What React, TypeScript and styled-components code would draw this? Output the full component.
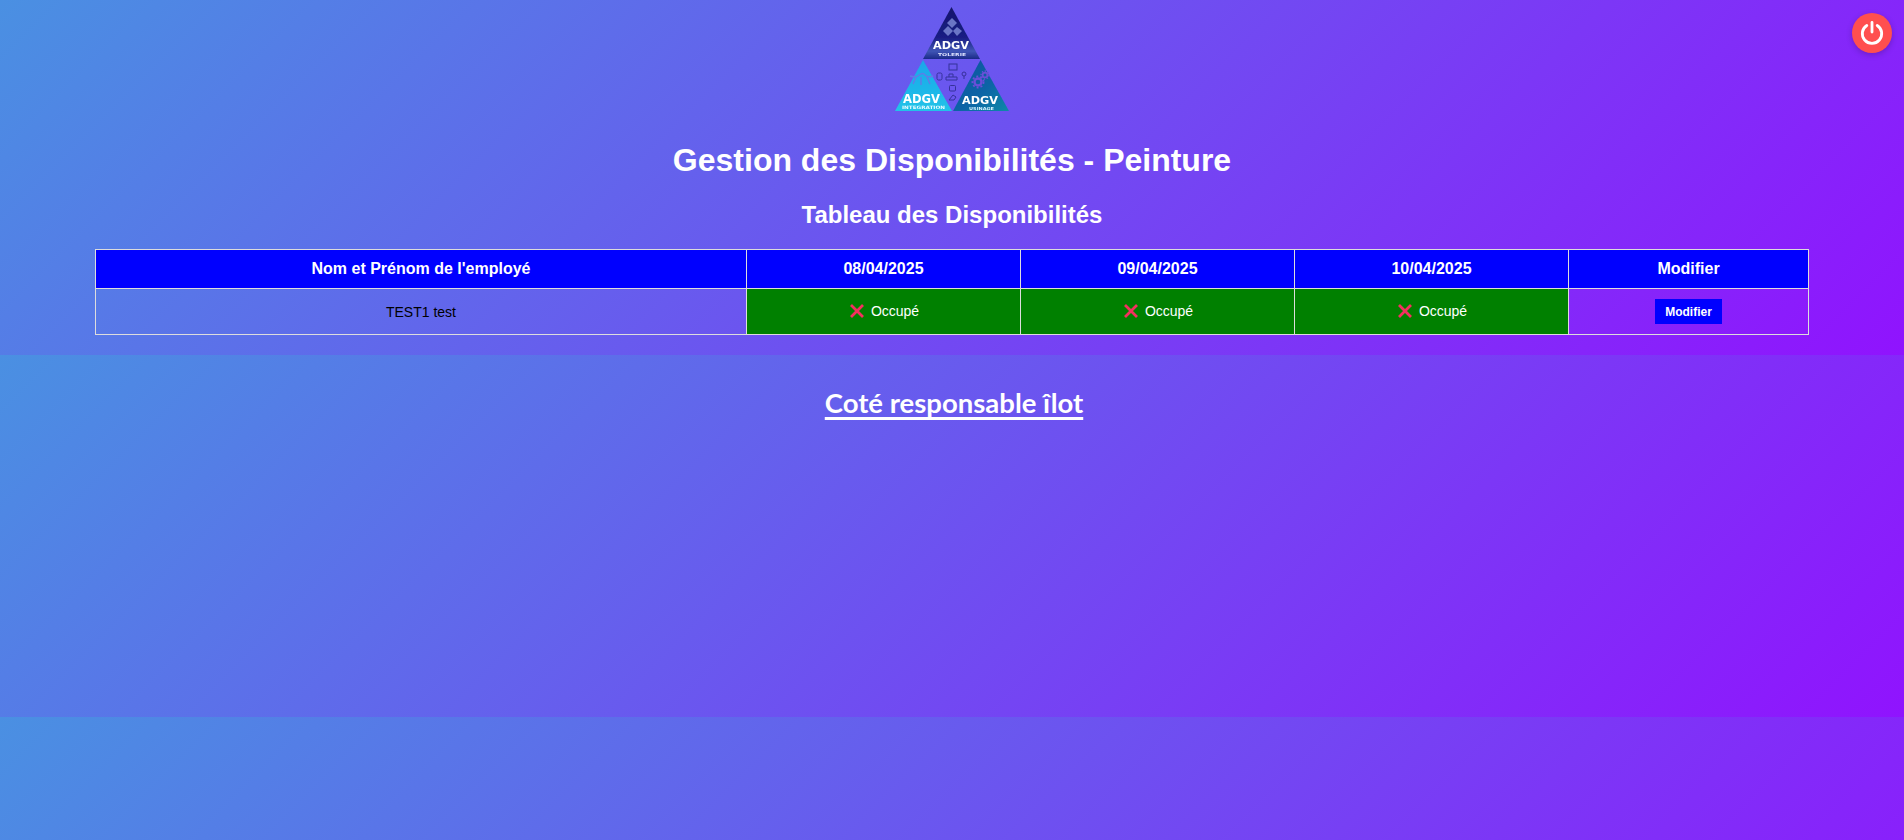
import React from "react";
import styled, { createGlobalStyle } from "styled-components";

const Global = createGlobalStyle`
  html, body { margin: 0; padding: 0; }
  body {
    font-family: "Liberation Sans", Arial, sans-serif;
    color: #fff;
    overflow: hidden;
  }
`;

const Page = styled.div`
  display: flex;
  flex-direction: column;
  height: 840px;
`;

const TopSection = styled.section`
  height: 355px;
  flex: none;
  background: linear-gradient(135deg, #4a90e2, #9013fe);
  display: flex;
  flex-direction: column;
  align-items: center;
`;

const LogoBox = styled.div`
  height: 120px;
  width: 114px;
  flex: none;
`;

const Title = styled.h1`
  margin: 22px 0 0;
  font-size: 32px;
  line-height: 37px;
  font-weight: 700;
  text-align: center;
`;

const SubTitle = styled.h2`
  margin: 22px 0 0;
  font-size: 24px;
  line-height: 28px;
  font-weight: 700;
  text-align: center;
`;

const Table = styled.table`
  margin-top: 20px;
  width: 1713px;
  table-layout: fixed;
  border-collapse: collapse;
`;

const HeadCell = styled.th`
  background: #0000ff;
  border: 1px solid #ddd;
  color: #fff;
  font-size: 16px;
  font-weight: 700;
  height: 38px;
  padding: 0;
  text-align: center;
`;

const Cell = styled.td<{ $busy?: boolean }>`
  background: ${(p) => (p.$busy ? "#008000" : "transparent")};
  border: 1px solid #ddd;
  color: ${(p) => (p.$busy ? "#fff" : "#000")};
  font-size: 14px;
  height: 45px;
  padding: 0;
  text-align: center;
`;

const Status = styled.span`
  display: inline-flex;
  align-items: center;
  gap: 7px;
  margin-left: 2px;
`;

const EditButton = styled.button`
  display: inline-block;
  width: 67px;
  height: 25px;
  border: none;
  padding: 0;
  background: #0000ff;
  color: #fff;
  font-family: "Liberation Sans", Arial, sans-serif;
  font-size: 12px;
  font-weight: 700;
  vertical-align: middle;
`;

const LowerSection = styled.section`
  height: 362px;
  flex: none;
  background: linear-gradient(135deg, #4a90e2, #9013fe);
  display: flex;
  flex-direction: column;
  align-items: center;
`;

const LowerTitle = styled.h2`
  margin: 31px 0 0 4px;
  font-family: Lato, "Open Sans", sans-serif;
  font-size: 27.5px;
  line-height: 34px;
  font-weight: 700;
  text-decoration: underline;
  text-decoration-thickness: 3px;
  text-underline-offset: 4px;
  text-decoration-skip-ink: none;
`;

const BottomBand = styled.div`
  flex: 1;
  background: linear-gradient(135deg, #4a90e2, #9013fe) 0 0 / 100% 358px no-repeat;
`;

const PowerButton = styled.button`
  position: fixed;
  top: 13px;
  right: 12px;
  width: 40px;
  height: 40px;
  border: none;
  border-radius: 50%;
  padding: 0;
  background: #ff4f4f;
  box-shadow: 0 2px 6px rgba(0, 0, 0, 0.2);
  display: flex;
  align-items: center;
  justify-content: center;
`;

const logoFont = "'DejaVu Sans', 'Liberation Sans', sans-serif";

const Logo = () => (
  <svg width="114" height="120" viewBox="0 0 114 120" aria-label="ADGV">
    <defs>
      <linearGradient id="tg" x1="0" y1="0" x2="0" y2="1">
        <stop offset="0" stopColor="#14146c" />
        <stop offset="0.6" stopColor="#1a1f85" />
        <stop offset="0.85" stopColor="#3f55b5" />
        <stop offset="1" stopColor="#1c2a88" />
      </linearGradient>
      <linearGradient id="lg" x1="0" y1="0" x2="0" y2="1">
        <stop offset="0" stopColor="#1aa5ea" />
        <stop offset="1" stopColor="#22c3e8" />
      </linearGradient>
      <linearGradient id="rg" x1="0" y1="0" x2="1" y2="1">
        <stop offset="0" stopColor="#0a4f9e" />
        <stop offset="0.6" stopColor="#0b66a6" />
        <stop offset="1" stopColor="#0d8aa8" />
      </linearGradient>
      <filter id="soft"><feGaussianBlur stdDeviation="0.4" /></filter>
    </defs>
    <g filter="url(#soft)">
      <polygon points="56.5,7 28,59 85,59" fill="url(#tg)" />
      <polygon points="28,60 0,111 57,111" fill="url(#lg)" />
      <polygon points="85.5,60 58,111 114,111" fill="url(#rg)" />
      <g fill="#7f8bd8" opacity="0.8">
        <polygon points="52,23 57,18 62,23 57,28" />
        <polygon points="48,31 53,26 58,31 53,36" />
        <polygon points="58,31 62,27 67,31 62,36" />
      </g>
      <g fill="none" stroke="#5f7ce8" strokeWidth="1.4">
        <path d="M15 76 q6 2 9 -1 q4 -3 6 0 q3 3 8 1" />
        <path d="M21 77 l-3 7 M26 77 v8 M32 77 l3 7" />
      </g>
      <g fill="none" stroke="#6a4fd8">
        <circle cx="83" cy="82" r="3.5" strokeWidth="2.4" />
        <circle cx="83" cy="82" r="5.6" strokeWidth="1.8" strokeDasharray="2 2" />
        <circle cx="90" cy="75" r="2.4" strokeWidth="1.8" />
        <circle cx="90" cy="75" r="4" strokeWidth="1.3" strokeDasharray="1.5 1.5" />
      </g>
      <g fill="none" stroke="#35309a" strokeWidth="1">
        <rect x="54" y="64" width="8" height="6" />
        <rect x="42" y="73" width="5" height="7" rx="1.5" />
        <path d="M51 77 h11 v3 h-11 z M54 77 v-3 h4 v3" />
        <circle cx="69" cy="74" r="2" />
        <path d="M69 76 v3" />
        <rect x="54.5" y="85.5" width="6" height="5.5" rx="1" />
        <path d="M54 100 h5 l2 -3 -3 -2 z" />
      </g>
      <text x="38" y="49" textLength="36" lengthAdjust="spacingAndGlyphs" fill="#fff" fontFamily={logoFont} fontWeight="700" fontSize="11">ADGV</text>
      <text x="43" y="55.5" textLength="28" lengthAdjust="spacingAndGlyphs" fill="#dfe4ff" fontFamily={logoFont} fontWeight="700" fontSize="4">TOLERIE</text>
      <text x="8" y="103" textLength="37" lengthAdjust="spacingAndGlyphs" fill="#fff" fontFamily={logoFont} fontWeight="700" fontSize="11.5">ADGV</text>
      <text x="7" y="109" textLength="43" lengthAdjust="spacingAndGlyphs" fill="#e8fbff" fontFamily={logoFont} fontWeight="700" fontSize="4.5">INTEGRATION</text>
      <text x="67" y="104" textLength="36" lengthAdjust="spacingAndGlyphs" fill="#fff" fontFamily={logoFont} fontWeight="700" fontSize="11">ADGV</text>
      <text x="74" y="109.5" textLength="25" lengthAdjust="spacingAndGlyphs" fill="#d8f4ff" fontFamily={logoFont} fontWeight="700" fontSize="4">USINAGE</text>
    </g>
  </svg>
);

const CrossIcon = () => (
  <svg width="14" height="14" viewBox="0 0 14 14">
    <path d="M1 1 L13 13 M13 1 L1 13" stroke="#f4305f" strokeWidth="2.8" strokeLinecap="butt" fill="none" />
  </svg>
);

const PowerIcon = () => (
  <svg width="24" height="24" viewBox="0 0 24 24" fill="none" stroke="#fff" strokeWidth="2.8" strokeLinecap="round">
    <path d="M12 1.5 V11" />
    <path d="M6.8 4.5 A9.7 9.7 0 1 0 17.2 4.5" />
  </svg>
);

const dates = ["08/04/2025", "09/04/2025", "10/04/2025"];

export default function App() {
  return (
    <Page>
      <Global />
      <TopSection>
        <LogoBox><Logo /></LogoBox>
        <Title>Gestion des Disponibilités - Peinture</Title>
        <SubTitle>Tableau des Disponibilités</SubTitle>
        <Table>
          <colgroup>
            <col width="651" />
            <col width="274" />
            <col width="274" />
            <col width="274" />
            <col width="240" />
          </colgroup>
          <thead>
            <tr>
              <HeadCell>Nom et Prénom de l'employé</HeadCell>
              {dates.map((d) => <HeadCell key={d}>{d}</HeadCell>)}
              <HeadCell>Modifier</HeadCell>
            </tr>
          </thead>
          <tbody>
            <tr>
              <Cell>TEST1 test</Cell>
              {dates.map((d) => (
                <Cell $busy key={d}>
                  <Status><CrossIcon />Occupé</Status>
                </Cell>
              ))}
              <Cell><EditButton>Modifier</EditButton></Cell>
            </tr>
          </tbody>
        </Table>
      </TopSection>
      <LowerSection>
        <LowerTitle>Coté responsable îlot</LowerTitle>
      </LowerSection>
      <BottomBand />
      <PowerButton aria-label="Déconnexion"><PowerIcon /></PowerButton>
    </Page>
  );
}
